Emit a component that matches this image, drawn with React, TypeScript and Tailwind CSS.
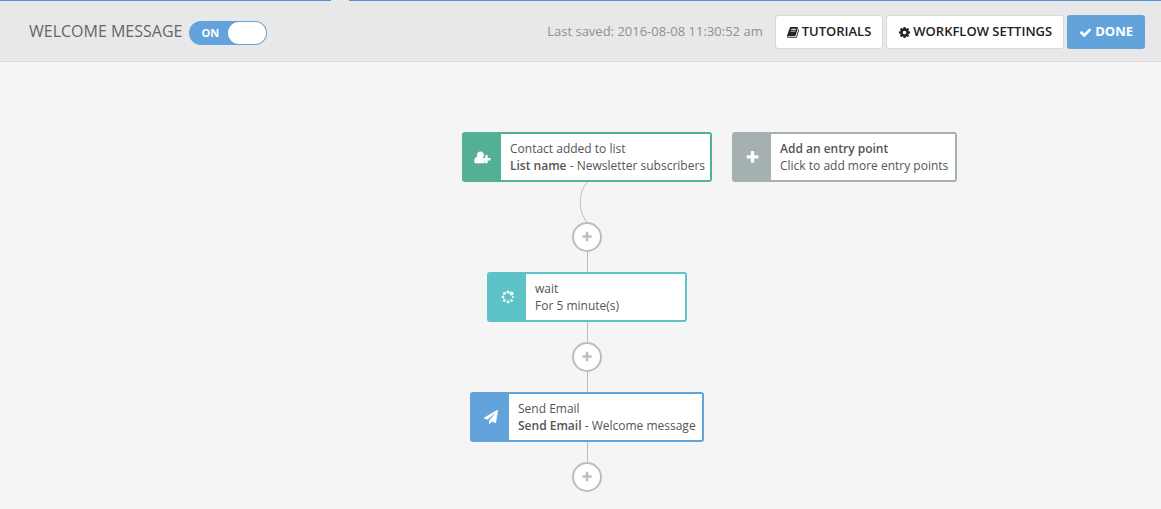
import React from 'react';
import clsx from 'clsx';

const paths = {
  book: 'M1639 478q40 57 18 129l-275 906q-19 64-76.5 107.5t-122.5 43.5h-923q-77 0-148.5-53.5t-99.5-131.5q-24-67-2-127 0-4 3-27t4-37q1-8-3-21.5t-3-19.5q2-11 8-21t16.5-23.5 16.5-23.5q23-38 45-91.5t30-91.5q3-10 .5-30t-.5-28q3-11 17-28t17-23q21-36 42-92t25-90q1-9-2.5-32t.5-28q4-13 22-30.5t22-22.5q19-26 42.5-84.5t27.5-96.5q1-8-3-25.5t-2-26.5q2-8 9-18t18-23 17-21q8-12 16.5-30.5t15-35 16-36 19.5-32 26.5-23.5 36-11.5 47.5 5.5l-1 3q38-9 51-9h761q74 0 114 56t18 130l-274 906q-36 119-71.5 153.5t-128.5 34.5h-869q-27 0-38 15-11 16-1 43 24 70 144 70h923q29 0 56-15.5t35-41.5l300-987q7-22 5-57 38 15 59 43zm-1064 2q-4 13 2 22.5t20 9.5h608q13 0 25.5-9.5t16.5-22.5l21-64q4-13-2-22.5t-20-9.5h-608q-13 0-25.5 9.5t-16.5 22.5zm-83 256q-4 13 2 22.5t20 9.5h608q13 0 25.5-9.5t16.5-22.5l21-64q4-13-2-22.5t-20-9.5h-608q-13 0-25.5 9.5t-16.5 22.5z',
  cog: 'M1152 896q0-106-75-181t-181-75-181 75-75 181 75 181 181 75 181-75 75-181zm512-109v222q0 12-8 23t-20 13l-185 28q-19 54-39 91 35 50 107 138 10 12 10 25t-9 23q-27 37-99 108t-94 71q-12 0-26-9l-138-108q-44 23-91 38-16 136-29 186-7 28-36 28h-222q-14 0-24.5-8.5t-11.5-21.5l-28-184q-49-16-90-37l-141 107q-10 9-25 9-14 0-25-11-126-114-165-168-7-10-7-23 0-12 8-23 15-21 51-66.5t54-70.5q-27-50-41-99l-183-27q-13-2-21-12.5t-8-23.5v-222q0-12 8-23t19-13l186-28q14-46 39-92-40-57-107-138-10-12-10-24 0-10 9-23 26-36 98.5-107.5t94.5-71.5q13 0 26 10l138 107q44-23 91-38 16-136 29-186 7-28 36-28h222q14 0 24.5 8.5t11.5 21.5l28 184q49 16 90 37l142-107q9-9 24-9 13 0 25 10 129 119 165 170 7 8 7 22 0 12-8 23-15 21-51 66.5t-54 70.5q26 50 41 98l183 28q13 2 21 12.5t8 23.5z',
  check: 'M1671 566q0 40-28 68l-724 724-136 136q-28 28-68 28t-68-28l-136-136-362-362q-28-28-28-68t28-68l136-136q28-28 68-28t68 28l294 295 656-657q28-28 68-28t68 28l136 136q28 28 28 68z',
  plus: 'M1600 736v192q0 40-28 68t-68 28h-416v416q0 40-28 68t-68 28h-192q-40 0-68-28t-28-68v-416h-416q-40 0-68-28t-28-68v-192q0-40 28-68t68-28h416v-416q0-40 28-68t68-28h192q40 0 68 28t28 68v416h416q40 0 68 28t28 68z',
  plane: 'M1764 11q33 24 27 64l-256 1536q-5 29-32 45-14 8-31 8-11 0-24-5l-453-185-242 295q-18 23-49 23-13 0-22-4-19-7-30.5-23.5t-11.5-36.5v-349l864-1059-1069 925-395-162q-37-14-40-55-2-40 32-59l1664-960q15-9 32-9 20 0 36 11z',
};

const Icon = ({ name, className }: { name: keyof typeof paths; className?: string }) => (
  <svg viewBox="0 0 1792 1792" fill="currentColor" className={clsx('shrink-0', className)} aria-hidden="true">
    <path d={paths[name]} />
  </svg>
);

const UserPlusIcon = () => (
  <svg viewBox="0 0 17 13" fill="currentColor" className="h-[13px] w-[17px]" aria-hidden="true">
    <path d="M6.5 0.5c2 0 3.4 1.4 3.4 3.4 0 1.3-.5 2.5-1.2 3.2V9h2v3.3H2C.8 12.3.2 11.5.2 10.5.2 8 1.2 6.2 3.3 5.8A4.5 4.5 0 0 1 3 3.9C3 1.9 4.5.5 6.5.5z" />
    <path d="M11.2 4.3h2.5v2.7h2.8v2.5h-2.8v2.7h-2.5V9.5H8.8V7h2.4z" />
  </svg>
);

const spinnerDots = [
  { cx: 7, cy: 2, r: 1.6 },
  { cx: 10.6, cy: 3.4, r: 2 },
  { cx: 12, cy: 7, r: 1.1 },
  { cx: 10.5, cy: 10.5, r: 1.3 },
  { cx: 7, cy: 12, r: 1.4 },
  { cx: 3.4, cy: 10.5, r: 1.4 },
  { cx: 2, cy: 7, r: 1.4 },
  { cx: 3.4, cy: 3.4, r: 1.4 },
];

const SpinnerIcon = () => (
  <svg viewBox="0 0 14 14" fill="currentColor" className="size-[14px]" aria-hidden="true">
    {spinnerDots.map((dot) => (
      <circle key={`${dot.cx}-${dot.cy}`} {...dot} />
    ))}
  </svg>
);

type NodeProps = {
  color: string;
  icon: React.ReactNode;
  className?: string;
  children: React.ReactNode;
};

const WorkflowNode = ({ color, icon, className, children }: NodeProps) => (
  <button
    type="button"
    className={clsx('flex h-[50px] rounded-[3px] border-2 text-left text-xs leading-[17px] text-[#555]', color, className)}
  >
    <span className="flex w-[37px] shrink-0 items-center justify-center self-stretch text-white">{icon}</span>
    <span className="flex h-full flex-1 flex-col justify-center whitespace-nowrap bg-white pl-[9px]">{children}</span>
  </button>
);

const Line = () => <div className="h-5 w-px bg-[#bdbdbd]" />;

const AddStep = () => (
  <button
    type="button"
    aria-label="Add step"
    className="flex size-[30px] items-center justify-center rounded-full border-2 border-[#bdbdbd] bg-white text-[#bdbdbd]"
  >
    <Icon name="plus" className="size-3" />
  </button>
);

const App = () => {
  const [on, setOn] = React.useState(true);

  return (
    <div className="min-h-screen bg-[#f5f5f5] font-['Open_Sans',sans-serif]">
      {/* Top bar */}
      <header className="bg-[#e8e8e8]">
        <div className="flex h-px">
          <div className="w-[331px] bg-[#4f94d6]" />
          <div className="w-[18px]" />
          <div className="flex-1 bg-[#4f94d6]" />
        </div>
        <div className="flex h-[61px] items-center border-b border-[#d9d9d9] pr-4 pl-[29px]">
          <h1 className="text-base whitespace-nowrap text-[#666]">WELCOME MESSAGE</h1>
          <label
            className={clsx(
              'mt-1 ml-[7px] flex h-6 w-[78px] cursor-pointer items-center rounded-full p-px pl-3 text-[11px] font-bold text-white has-focus-visible:outline-2',
              on ? 'bg-[#62a3dc]' : 'bg-[#a5b1b0]'
            )}
          >
            <input
              type="checkbox"
              role="switch"
              aria-label="Workflow active"
              checked={on}
              onChange={() => setOn(!on)}
              className="sr-only"
            />
            <span>{on ? 'ON' : 'OFF'}</span>
            <span className="ml-auto h-[22px] w-[38px] rounded-full bg-white" />
          </label>
          <p className="mt-[2px] mr-3 ml-auto text-[13px] whitespace-nowrap text-[#909090]">Last saved: 2016-08-08 11:30:52 am</p>
          <div className="mt-[2px] flex gap-[3px] text-[13px] font-semibold whitespace-nowrap text-[#222]">
            <button type="button" className="flex h-[34px] items-center gap-[2px] rounded-[3px] border border-[#d9d9d9] bg-white px-[11px]">
              <Icon name="book" className="size-[13px]" />
              TUTORIALS
            </button>
            <button type="button" className="flex h-[34px] items-center gap-[2px] rounded-[3px] border border-[#d9d9d9] bg-white px-[11px]">
              <Icon name="cog" className="size-[13px]" />
              WORKFLOW SETTINGS
            </button>
            <button type="button" className="flex h-[34px] items-center gap-[3px] rounded-[3px] bg-[#62a3dc] px-3 font-bold text-white">
              <Icon name="check" className="size-[13px]" />
              DONE
            </button>
          </div>
        </div>
      </header>

      {/* Workflow steps */}
      <main className="flex flex-col items-center pt-[70px] pl-[13px]">
        <div className="grid grid-cols-[1fr_250px_1fr] gap-5 self-stretch">
          <WorkflowNode color="border-[#54b095] bg-[#54b095]" icon={<UserPlusIcon />} className="col-start-2">
            <span>Contact added to list</span>
            <span>
              <b className="font-semibold">List name</b> - Newsletter subscribers
            </span>
          </WorkflowNode>
          <WorkflowNode
            color="border-[#a5b1b0] bg-[#a5b1b0]"
            icon={<Icon name="plus" className="size-[15px]" />}
            className="w-[225px]"
          >
            <b className="font-semibold">Add an entry point</b>
            <span>Click to add more entry points</span>
          </WorkflowNode>
        </div>
        <svg viewBox="0 0 18 40" fill="none" stroke="#bdbdbd" className="h-10 w-[18px]" aria-hidden="true">
          <path d="M9.5 0C0 10 0 30 9 40" />
        </svg>
        <AddStep />
        <Line />
        <WorkflowNode color="border-[#5ec3c8] bg-[#5ec3c8]" icon={<SpinnerIcon />} className="w-[200px]">
          <span>wait</span>
          <span>For 5 minute(s)</span>
        </WorkflowNode>
        <Line />
        <AddStep />
        <Line />
        <WorkflowNode color="border-[#62a3dc] bg-[#62a3dc]" icon={<Icon name="plane" className="size-[14px]" />} className="w-[234px]">
          <span>Send Email</span>
          <span>
            <b className="font-semibold">Send Email</b> - Welcome message
          </span>
        </WorkflowNode>
        <Line />
        <AddStep />
      </main>
    </div>
  );
};

export default App;
